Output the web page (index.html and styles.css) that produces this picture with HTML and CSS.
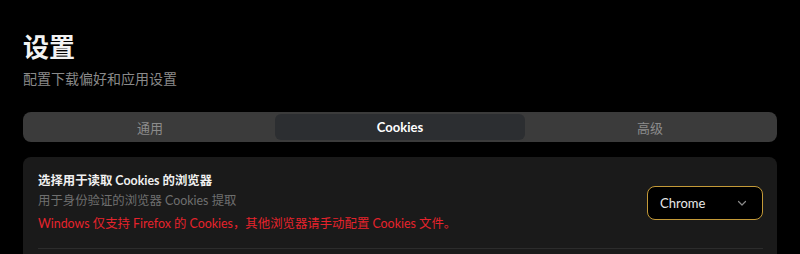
FILE: index.html
```html
<!DOCTYPE html>
<html lang="zh-CN">
<head>
<meta charset="utf-8">
<link rel="stylesheet" href="styles.css">
</head>
<body>
<div class="page">
  <h1 class="title">设置</h1>
  <p class="subtitle">配置下载偏好和应用设置</p>
  <div class="tabs">
    <div class="tab">通用</div>
    <div class="tab active">Cookies</div>
    <div class="tab">高级</div>
  </div>
  <div class="card">
    <div class="row">
      <div class="info">
        <div class="row-title">选择用于读取 Cookies 的浏览器</div>
        <div class="row-sub">用于身份验证的浏览器 Cookies 提取</div>
        <div class="row-warn">Windows 仅支持 Firefox 的 Cookies，其他浏览器请手动配置 Cookies 文件。</div>
      </div>
      <div class="select">
        <span class="select-value">Chrome</span>
        <svg class="chevron" width="12" height="12" viewBox="0 0 12 12"><path d="M2.5 4.5 L6 8 L9.5 4.5" fill="none" stroke="#8a8a8a" stroke-width="1.2" stroke-linecap="round" stroke-linejoin="round"/></svg>
      </div>
    </div>
  </div>
</div>
</body>
</html>
```

FILE: styles.css
```css
html, body {
  margin: 0;
  padding: 0;
  background: #000;
}
body {
  font-family: "Lato", "Noto Sans CJK SC", sans-serif;
  color: #fff;
  overflow: hidden;
  height: 254px;
}
.page {
  padding: 29px 23px 0;
}
.title {
  margin: 0;
  font-size: 26px;
  line-height: 34px;
  font-weight: 700;
  font-family: "Noto Sans CJK SC", sans-serif;
  color: #f2f2f2;
}
.subtitle {
  margin: 5px 0 0;
  font-size: 14px;
  line-height: 20px;
  color: #8a8a8a;
  font-family: "Noto Sans CJK SC", sans-serif;
}
.tabs {
  margin-top: 24px;
  height: 30px;
  box-sizing: border-box;
  padding: 2px;
  background: #3b3b3b;
  border-radius: 8px;
  display: grid;
  grid-template-columns: 1fr 1fr 1fr;
}
.tab {
  display: flex;
  align-items: center;
  justify-content: center;
  font-size: 13px;
  color: #8c8c8c;
  border-radius: 6px;
}
.tab.active {
  background: #2c2e31;
  color: #fff;
  font-weight: 700;
}
.card {
  margin-top: 15px;
  background: #1a1a1a;
  border-radius: 8px 8px 0 0;
  padding: 0 14px 0 15px;
  height: 97px;
  box-sizing: border-box;
}
.row {
  display: flex;
  align-items: center;
  justify-content: space-between;
  padding: 14px 0;
  border-bottom: 1px solid #2c2c2c;
}
.row-title {
  font-size: 12.4px;
  line-height: 20px;
  font-weight: 700;
  color: #f0f0f0;
}
.row-sub {
  font-size: 12.4px;
  line-height: 20px;
  color: #6f6f6f;
}
.row-warn {
  margin-top: 3px;
  font-size: 12.4px;
  line-height: 20px;
  color: #e6232c;
}
.select {
  width: 116px;
  height: 34px;
  box-sizing: border-box;
  border: 1px solid #c49a38;
  border-radius: 8px;
  background: #000;
  display: flex;
  align-items: center;
  justify-content: space-between;
  padding: 0 14px 0 12px;
}
.select-value {
  font-size: 13px;
  color: #e8e8e8;
}
.chevron {
  display: block;
}
```
